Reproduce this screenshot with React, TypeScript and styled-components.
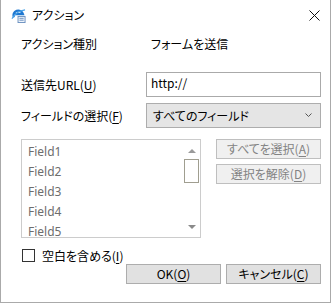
import React from "react";
import styled, { createGlobalStyle } from "styled-components";

const GlobalStyle = createGlobalStyle`
  html, body {
    margin: 0;
    padding: 0;
    background: #ffffff;
  }
  body {
    font-family: "Noto Sans CJK JP", "Noto Sans", sans-serif;
    font-size: 12px;
    color: #000;
  }
`;

const Window = styled.div`
  width: 331px;
  height: 303px;
  box-sizing: border-box;
  border: 1px solid #aaaaaa;
  border-top: none;
  background: #fff;
  display: flex;
  flex-direction: column;
  font-feature-settings: "palt";
  overflow: hidden;
`;

const TitleBar = styled.div`
  height: 30px;
  display: flex;
  align-items: center;
  padding: 0 10px 0 10px;
  gap: 6px;
`;

const Title = styled.span`
  flex: 1;
  font-size: 12px;
  line-height: 16px;
`;

const Body = styled.div`
  padding: 0 9px 0 20px;
  display: flex;
  flex-direction: column;
`;

const InfoRow = styled.div`
  margin-top: 6px;
  height: 16px;
  line-height: 16px;
  display: grid;
  grid-template-columns: 130px 1fr;
`;

const FormGrid = styled.div`
  margin-top: 20px;
  display: grid;
  grid-template-columns: 125px 175px;
  grid-auto-rows: 25px;
  row-gap: 6px;
  align-items: center;
`;

const Label = styled.span`
  line-height: 16px;
`;

const TextBox = styled.div`
  height: 25px;
  box-sizing: border-box;
  border: 1px solid #aaaaaa;
  background: #fff;
  padding: 0 4px;
  line-height: 19px;
`;

const Combo = styled.div`
  height: 25px;
  box-sizing: border-box;
  border: 1px solid #adadad;
  background: #e5e5e5;
  padding: 0 8px 0 6px;
  display: flex;
  align-items: center;
  justify-content: space-between;
`;

const ListSection = styled.div`
  margin-top: 11px;
  display: flex;
  gap: 15px;
  align-items: flex-start;
`;

const ListBox = styled.div`
  width: 180px;
  height: 99px;
  box-sizing: border-box;
  border: 1px solid #cccccc;
  background: #fff;
  display: flex;
  overflow: hidden;
`;

const Items = styled.div`
  flex: 1;
  padding: 2px 0 0 6px;
`;

const Item = styled.div`
  height: 20px;
  line-height: 20px;
  color: #6d6d6d;
  font-family: "Noto Sans", "Noto Sans CJK JP", sans-serif;
  font-size: 12px;
`;

const ScrollBar = styled.div`
  width: 17px;
  display: flex;
  flex-direction: column;
  align-items: center;
  padding-top: 9px;
  box-sizing: border-box;
`;

const Arrow = styled.div<{ $down?: boolean }>`
  width: 0;
  height: 0;
  border-left: 4px solid transparent;
  border-right: 4px solid transparent;
  ${(p) =>
    p.$down
      ? "border-top: 4px solid #8a8a8a;"
      : "border-bottom: 4px solid #9a9a9a;"}
`;

const Thumb = styled.div`
  margin-top: 6px;
  width: 15px;
  height: 24px;
  box-sizing: border-box;
  border: 1px solid #a09e90;
  background: #fff;
  margin-bottom: 42px;
  margin-left: -1px;
`;

const SideButtons = styled.div`
  display: flex;
  flex-direction: column;
  gap: 5px;
`;

const Button = styled.div<{ $disabled?: boolean; $width: number }>`
  width: ${(p) => p.$width}px;
  height: 20px;
  box-sizing: border-box;
  border: 1px solid ${(p) => (p.$disabled ? "#bfbfbf" : "#adadad")};
  background: ${(p) => (p.$disabled ? "#f0f0f0" : "#e1e1e1")};
  color: ${(p) => (p.$disabled ? "#838383" : "#000")};
  display: flex;
  align-items: center;
  justify-content: center;
  line-height: 16px;
`;

const CheckRow = styled.div`
  margin-top: 10px;
  height: 14px;
  display: flex;
  align-items: center;
  gap: 7px;
  padding-left: 1px;
`;

const CheckBox = styled.div`
  width: 13px;
  height: 13px;
  box-sizing: border-box;
  border: 1px solid #333;
  background: #fff;
`;

const ButtonRow = styled.div`
  margin-top: 2px;
  display: flex;
  justify-content: flex-end;
  gap: 5px;
`;

const Key = styled.u`
  text-underline-offset: 2px;
  text-decoration-thickness: 1px;
`;

const AppIcon = () => (
  <svg width="15" height="15" viewBox="0 0 16 16">
    <path
      d="M3 10 A5.2 5.2 0 1 1 12.8 6.6 L4.2 6.6"
      fill="none"
      stroke="#1f78d1"
      strokeWidth="2.4"
    />
    <path d="M1 11.5 Q6 3 15 2" fill="none" stroke="#4aa3e8" strokeWidth="1.2" />
    <rect x="7.5" y="9" width="7.5" height="6.5" fill="#eef4fb" stroke="#6a8fbf" />
    <path d="M9 11h4.5M9 13h4.5" stroke="#6a8fbf" strokeWidth="1" />
  </svg>
);

const CloseIcon = () => (
  <svg width="11" height="11" viewBox="0 0 11 11">
    <path d="M0.5 0.5 L10.5 10.5 M10.5 0.5 L0.5 10.5" stroke="#111" strokeWidth="1" />
  </svg>
);

const Chevron = () => (
  <svg width="7" height="5" viewBox="0 0 7 5">
    <path d="M0.5 0.5 L3.5 3.5 L6.5 0.5" fill="none" stroke="#555" strokeWidth="1" />
  </svg>
);

const fields = ["Field1", "Field2", "Field3", "Field4", "Field5"];

export default function App() {
  return (
    <>
      <GlobalStyle />
      <Window>
        <TitleBar>
          <AppIcon />
          <Title>アクション</Title>
          <CloseIcon />
        </TitleBar>
        <Body>
          <InfoRow>
            <span>アクション種別</span>
            <span>フォームを送信</span>
          </InfoRow>
          <FormGrid>
            <Label>
              送信先URL(<Key>U</Key>)
            </Label>
            <TextBox>http://</TextBox>
            <Label>
              フィールドの選択(<Key>F</Key>)
            </Label>
            <Combo>
              <span>すべてのフィールド</span>
              <Chevron />
            </Combo>
          </FormGrid>
          <ListSection>
            <ListBox>
              <Items>
                {fields.map((f) => (
                  <Item key={f}>{f}</Item>
                ))}
              </Items>
              <ScrollBar>
                <Arrow />
                <Thumb />
                <Arrow $down />
              </ScrollBar>
            </ListBox>
            <SideButtons>
              <Button $disabled $width={105}>
                すべてを選択(<Key>A</Key>)
              </Button>
              <Button $disabled $width={105}>
                選択を解除(<Key>D</Key>)
              </Button>
            </SideButtons>
          </ListSection>
          <CheckRow>
            <CheckBox />
            <span>
              空白を含める(<Key>I</Key>)
            </span>
          </CheckRow>
          <ButtonRow>
            <Button $width={95}>
              OK(<Key>O</Key>)
            </Button>
            <Button $width={95}>
              キャンセル(<Key>C</Key>)
            </Button>
          </ButtonRow>
        </Body>
      </Window>
    </>
  );
}
